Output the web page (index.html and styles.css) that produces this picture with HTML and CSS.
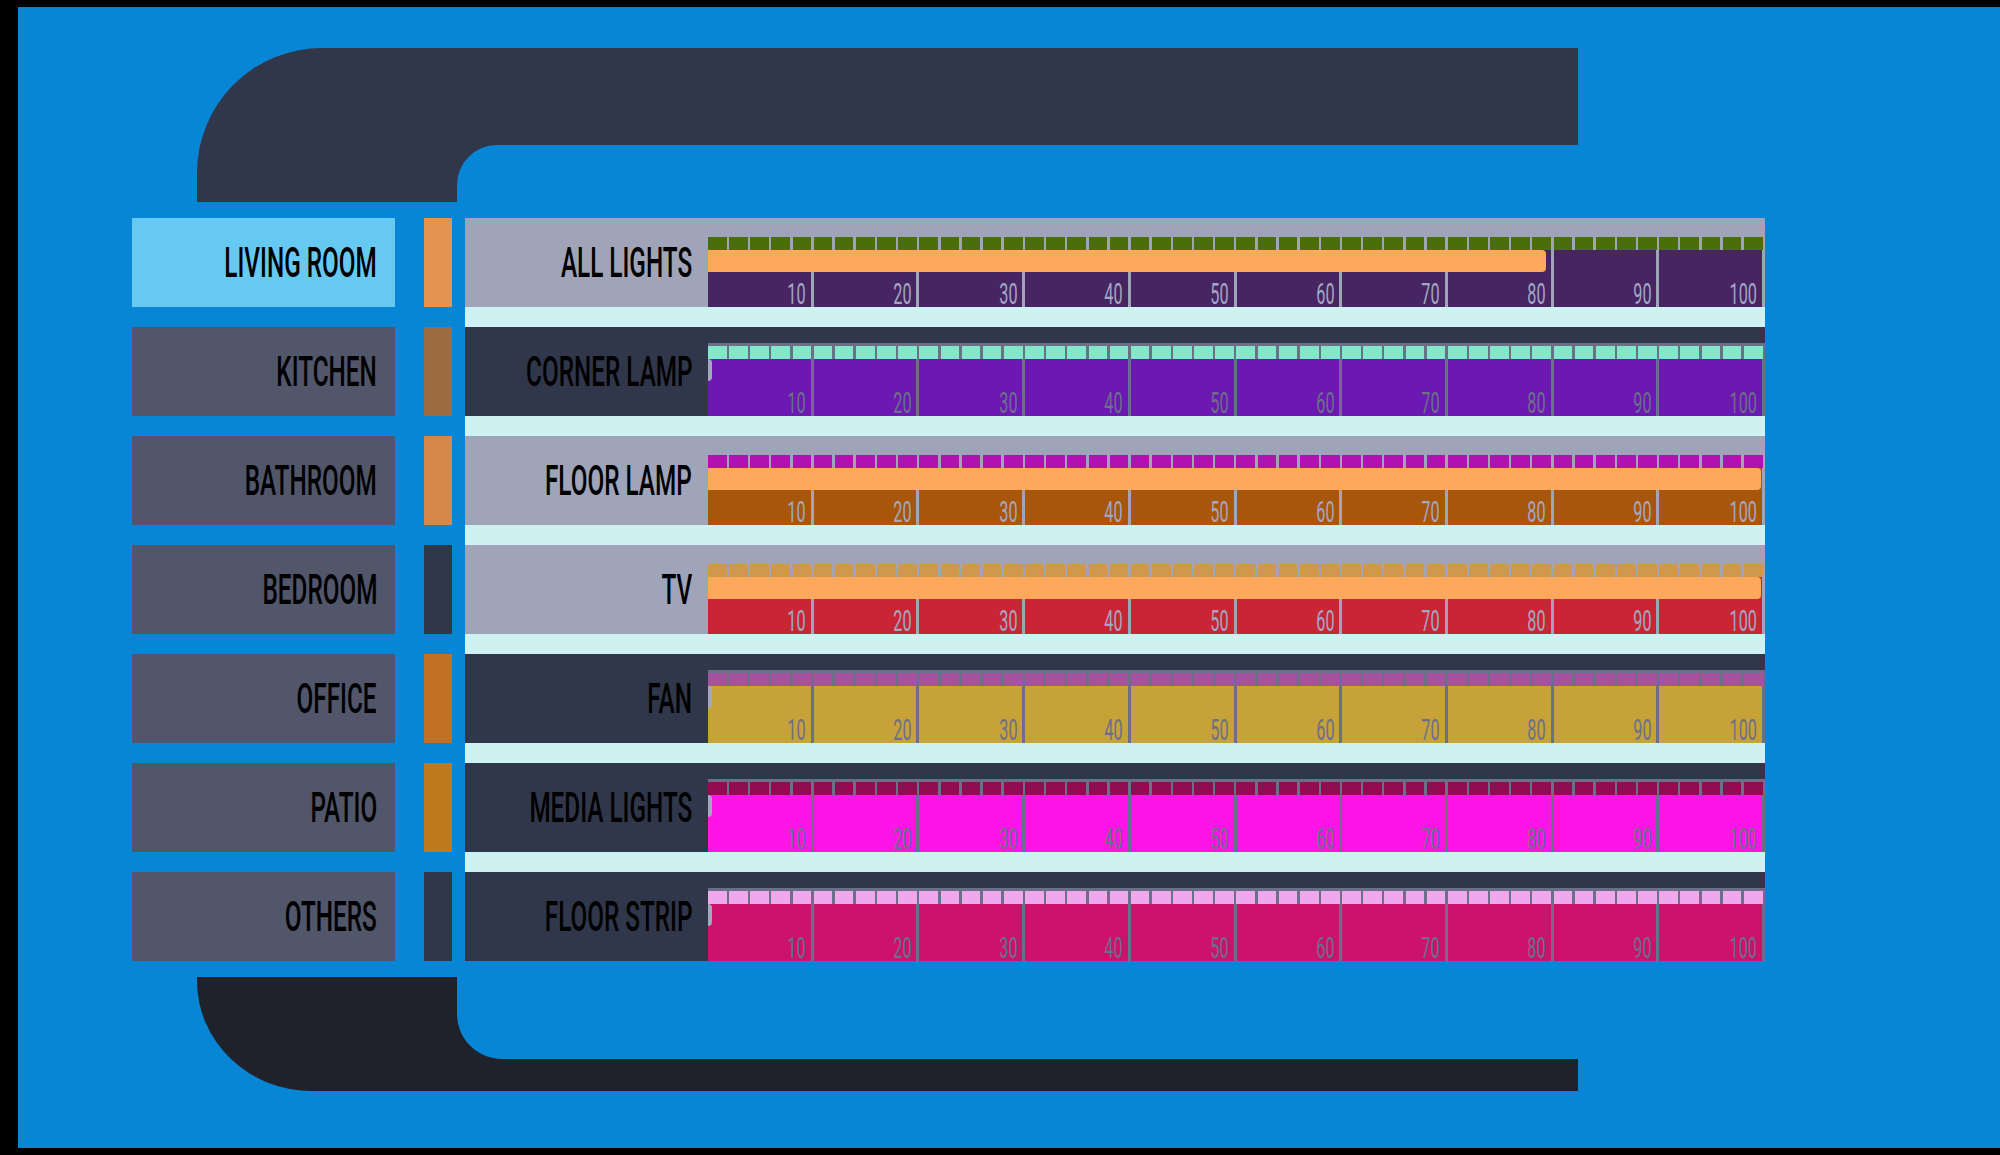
FILE: index.html
```html
<!DOCTYPE html>
<html lang="en">
<head>
<meta charset="utf-8">
<title>Lighting Console</title>
<link rel="stylesheet" href="styles.css">
</head>
<body>
<div class="screen">
  <div class="frame-top"><div class="notch-top"></div></div>

  <div class="console">
    <div class="rooms">
      <div class="room active"><span>LIVING ROOM</span></div>
      <div class="room"><span>KITCHEN</span></div>
      <div class="room"><span>BATHROOM</span></div>
      <div class="room"><span>BEDROOM</span></div>
      <div class="room"><span>OFFICE</span></div>
      <div class="room"><span>PATIO</span></div>
      <div class="room"><span>OTHERS</span></div>
    </div>

    <div class="strips">
      <div class="strip s-living"></div>
      <div class="strip s-kitchen"></div>
      <div class="strip s-bath"></div>
      <div class="strip s-bed"></div>
      <div class="strip s-office"></div>
      <div class="strip s-patio"></div>
      <div class="strip s-others"></div>
    </div>

    <div class="devices">
      <div class="device light r-all">
        <div class="label"><span>ALL LIGHTS</span></div>
        <div class="bar"><div class="track"><div class="ticks"></div>
          <div class="base">
            <div class="cell"><span>10</span></div><div class="cell"><span>20</span></div><div class="cell"><span>30</span></div><div class="cell"><span>40</span></div><div class="cell"><span>50</span></div><div class="cell"><span>60</span></div><div class="cell"><span>70</span></div><div class="cell"><span>80</span></div><div class="cell"><span>90</span></div><div class="cell"><span>100</span></div>
            <div class="fill" style="width:79.25%"></div>
          </div>
        </div></div>
      </div>

      <div class="device dark r-corner">
        <div class="label"><span>CORNER LAMP</span></div>
        <div class="bar"><div class="track"><div class="ticks"></div>
          <div class="base">
            <div class="cell"><span>10</span></div><div class="cell"><span>20</span></div><div class="cell"><span>30</span></div><div class="cell"><span>40</span></div><div class="cell"><span>50</span></div><div class="cell"><span>60</span></div><div class="cell"><span>70</span></div><div class="cell"><span>80</span></div><div class="cell"><span>90</span></div><div class="cell"><span>100</span></div>
            <div class="fill zero"></div>
          </div>
        </div></div>
      </div>

      <div class="device light r-floor">
        <div class="label"><span>FLOOR LAMP</span></div>
        <div class="bar"><div class="track"><div class="ticks"></div>
          <div class="base">
            <div class="cell"><span>10</span></div><div class="cell"><span>20</span></div><div class="cell"><span>30</span></div><div class="cell"><span>40</span></div><div class="cell"><span>50</span></div><div class="cell"><span>60</span></div><div class="cell"><span>70</span></div><div class="cell"><span>80</span></div><div class="cell"><span>90</span></div><div class="cell"><span>100</span></div>
            <div class="fill" style="width:99.62%"></div>
          </div>
        </div></div>
      </div>

      <div class="device light r-tv">
        <div class="label"><span>TV</span></div>
        <div class="bar"><div class="track"><div class="ticks"></div>
          <div class="base">
            <div class="cell"><span>10</span></div><div class="cell"><span>20</span></div><div class="cell"><span>30</span></div><div class="cell"><span>40</span></div><div class="cell"><span>50</span></div><div class="cell"><span>60</span></div><div class="cell"><span>70</span></div><div class="cell"><span>80</span></div><div class="cell"><span>90</span></div><div class="cell"><span>100</span></div>
            <div class="fill" style="width:99.62%"></div>
          </div>
        </div></div>
      </div>

      <div class="device dark r-fan">
        <div class="label"><span>FAN</span></div>
        <div class="bar"><div class="track"><div class="ticks"></div>
          <div class="base">
            <div class="cell"><span>10</span></div><div class="cell"><span>20</span></div><div class="cell"><span>30</span></div><div class="cell"><span>40</span></div><div class="cell"><span>50</span></div><div class="cell"><span>60</span></div><div class="cell"><span>70</span></div><div class="cell"><span>80</span></div><div class="cell"><span>90</span></div><div class="cell"><span>100</span></div>
            <div class="fill zero"></div>
          </div>
        </div></div>
      </div>

      <div class="device dark r-media">
        <div class="label"><span>MEDIA LIGHTS</span></div>
        <div class="bar"><div class="track"><div class="ticks"></div>
          <div class="base">
            <div class="cell"><span>10</span></div><div class="cell"><span>20</span></div><div class="cell"><span>30</span></div><div class="cell"><span>40</span></div><div class="cell"><span>50</span></div><div class="cell"><span>60</span></div><div class="cell"><span>70</span></div><div class="cell"><span>80</span></div><div class="cell"><span>90</span></div><div class="cell"><span>100</span></div>
            <div class="fill zero"></div>
          </div>
        </div></div>
      </div>

      <div class="device dark r-strip">
        <div class="label"><span>FLOOR STRIP</span></div>
        <div class="bar"><div class="track"><div class="ticks"></div>
          <div class="base">
            <div class="cell"><span>10</span></div><div class="cell"><span>20</span></div><div class="cell"><span>30</span></div><div class="cell"><span>40</span></div><div class="cell"><span>50</span></div><div class="cell"><span>60</span></div><div class="cell"><span>70</span></div><div class="cell"><span>80</span></div><div class="cell"><span>90</span></div><div class="cell"><span>100</span></div>
            <div class="fill zero"></div>
          </div>
        </div></div>
      </div>
    </div>
  </div>

  <div class="frame-bottom"><div class="notch-bottom"></div></div>
</div>
</body>
</html>
```

FILE: styles.css
```css
* { box-sizing: border-box; }

html, body {
  margin: 0;
  background: #000;
}

body {
  font-family: Roboto, "Liberation Sans", sans-serif;
}

.screen {
  margin: 7px 0 0 18px;
  width: 1982px;
  height: 1141px;
  background: #0786d5;
  padding-top: 41px;
  overflow: hidden;
}

/* top elbow */
.frame-top {
  margin-left: 179px;
  width: 1381px;
  height: 154px;
  background: #31374a;
  border-top-left-radius: 125px;
  padding: 97px 0 0 260px;
}
.notch-top {
  height: 57px;
  background: #0786d5;
  border-top-left-radius: 40px;
}

/* bottom elbow */
.frame-bottom {
  margin: 16px 0 0 179px;
  width: 1381px;
  height: 114px;
  background: #1f222a;
  border-bottom-left-radius: 115px 110px;
  padding-left: 260px;
}
.notch-bottom {
  height: 82px;
  background: #0786d5;
  border-bottom-left-radius: 45px;
}

/* main console */
.console {
  display: flex;
  margin: 16px 0 0 114px;
  height: 743px;
}

.rooms {
  width: 263px;
  display: flex;
  flex-direction: column;
  gap: 20px;
}
.room {
  height: 89px;
  background: #51566b;
  display: flex;
  align-items: center;
  justify-content: flex-end;
  padding-right: 18px;
}
.room.active { background: #66c9f1; }

.room span,
.label span {
  display: inline-block;
  flex-shrink: 0;
  white-space: nowrap;
  font-size: 43px;
  line-height: 1;
  font-weight: 500;
  color: #000;
  transform: scaleX(0.565);
  transform-origin: right center;
}

.strips {
  width: 28px;
  margin-left: 29px;
  display: flex;
  flex-direction: column;
  gap: 20px;
}
.strip { height: 89px; }
.s-living { background: #e3944f; }
.s-kitchen { background: #9c6b3f; }
.s-bath { background: #d4894a; }
.s-bed { background: #31374a; }
.s-office { background: #c27021; }
.s-patio { background: #bf7a1f; }
.s-others { background: #31374a; }

.devices {
  margin-left: 13px;
  width: 1300px;
  background: #cdf2f1;
  display: flex;
  flex-direction: column;
  gap: 20px;
}

.device {
  height: 89px;
  display: flex;
  background: var(--panel);
}
.device.light {
  --panel: #9fa4b9;
  --track: #9fa4b9;
  --num: #a3a8c2;
}
.device.dark {
  --panel: #31374a;
  --track: #6b7089;
  --num: #6b7089;
}

.r-all { --tick: #4a6e0c; --base: #462562; }
.r-corner { --tick: #82e8c9; --base: #6c19b3; }
.r-floor { --tick: #b012b0; --base: #a8560b; }
.r-tv { --tick: #cf984b; --base: #c92635; }
.r-fan { --tick: #a5539e; --base: #c6a238; }
.r-media { --tick: #920c52; --base: #fd14e6; }
.r-strip { --tick: #f0a8ec; --base: #cb126d; }

.label {
  width: 243px;
  display: flex;
  align-items: center;
  justify-content: flex-end;
  padding-right: 16px;
}

.bar {
  flex: 1;
  padding-top: 16px;
  display: flex;
}
.track {
  flex: 1;
  background: var(--track);
  padding-top: 3px;
  display: flex;
  flex-direction: column;
}
.ticks {
  height: 13px;
  background: repeating-linear-gradient(90deg,
    var(--tick) 0, var(--tick) calc(2% - 2.5px),
    transparent calc(2% - 2.5px), transparent 2%);
}
.base {
  flex: 1;
  position: relative;
  display: flex;
  background: var(--base);
}
.cell {
  flex: 1;
  border-right: 3px solid var(--track);
  display: flex;
  align-items: flex-end;
  justify-content: flex-end;
  padding-right: 5px;
}
.cell span {
  display: inline-block;
  font-size: 29px;
  line-height: 1;
  font-weight: 400;
  color: var(--num);
  margin-bottom: -2px;
  transform: scaleX(0.56);
  transform-origin: right bottom;
}

.fill {
  position: absolute;
  left: 0;
  top: 0;
  height: 22px;
  background: #fda85a;
  border-radius: 0 4px 4px 0;
}
.fill.zero {
  width: 4px;
  background: #a4a9bd;
}
```
